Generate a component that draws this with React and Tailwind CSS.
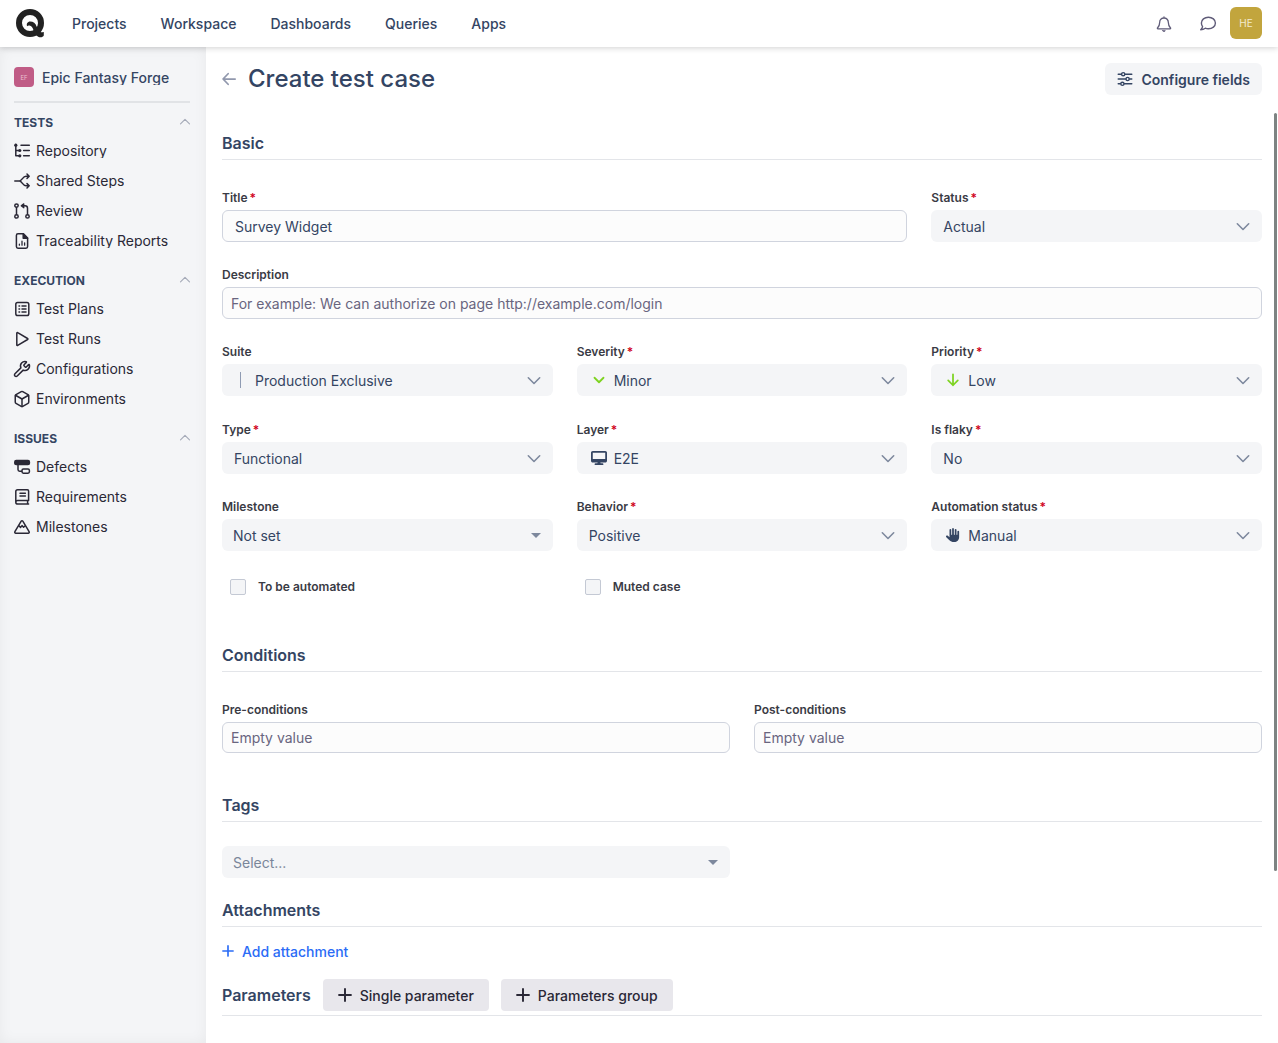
import { FaDesktop, FaHand } from "react-icons/fa6";
import { Wrench, Box } from "lucide-react";

function Icon({ children, size = "size-4", width = 1.5, className = "" }) {
  return (
    <svg
      viewBox="0 0 16 16"
      aria-hidden="true"
      fill="none"
      stroke="currentColor"
      strokeWidth={width}
      strokeLinecap="round"
      strokeLinejoin="round"
      className={`shrink-0 overflow-visible ${size} ${className}`}
    >
      {children}
    </svg>
  );
}

const TreeIcon = () => (
  <Icon>
    <path d="M1.8 1.5v11.3h3.4M1.8 7.500h3.400M7 2.200h8.300M9.600 7.500h5.700M9.600 12.800h5.700" />
    <g fill="currentColor" stroke="none">
      <circle cx="1.8" cy="2.2" r="1.6" />
      <circle cx="5.8" cy="7.5" r="1.6" />
      <circle cx="5.8" cy="12.8" r="1.6" />
    </g>
  </Icon>
);
const SplitIcon = () => (
  <Icon>
    <path d="M.8 8h4.700M5.500 8c2.400 0 3.200-4.800 6.500-4.800h3M5.500 8c2.400 0 3.200 4.800 6.500 4.800h3M13 1l2.200 2.200L13 5.400M13 10.600l2.200 2.200L13 15" />
  </Icon>
);
const ReviewIcon = () => (
  <Icon>
    <circle cx="2.5" cy="2.6" r="1.7" />
    <circle cx="2.5" cy="13.4" r="1.7" />
    <circle cx="13.5" cy="13.4" r="1.7" />
    <path d="M2.500 4.400v7.200M13.500 11.600V5.200c0-1.600-.8-2.400-2.400-2.400H9" />
    <path d="M9.800.8v4L7.200 2.800z" fill="currentColor" strokeWidth="1.2" />
  </Icon>
);
const ReportIcon = () => (
  <Icon>
    <path d="M4 .8h5.400l4.200 4.200v8.600c0 .9-.7 1.600-1.600 1.600H4c-.9 0-1.600-.7-1.600-1.600V2.400C2.400 1.500 3.100.8 4 .8z" />
    <path d="M9.200.8V5.200h4.400z" fill="currentColor" />
    <path d="M5.400 11.200v1M8 8.200v4M10.600 9.800v2.400" strokeWidth="1.3" />
  </Icon>
);
const PlanIcon = () => (
  <Icon>
    <rect x="1.8" y="1.5" width="13" height="13" rx="1.8" />
    <path d="M8 5h4M8 8h4M8 11h4M5 5h.6M5 8h.6M5 11h.6" />
  </Icon>
);
const PlayIcon = () => (
  <Icon>
    <path d="M2.800 2.100v11.800c0 .5.500.8.900.5l9.900-5.900c.4-.2.4-.8 0-1L3.700 1.600c-.4-.3-.9 0-.9.500z" />
  </Icon>
);
const DefectIcon = () => (
  <Icon>
    <rect x=".8" y="1.6" width="14.6" height="4" rx="1.4" fill="currentColor" />
    <path d="M4 6v4.600c0 1 .6 1.600 1.600 1.600h2" />
    <rect x="8" y="10" width="7.4" height="4.2" rx="1.4" />
  </Icon>
);
const BookIcon = () => (
  <Icon>
    <path d="M14.600 11.600V2c0-.6-.5-1.200-1.200-1.200H3.600C2.600.8 1.800 1.600 1.800 2.600v10.600c0 1 .9 1.900 2 1.900h10.800M14.600 11.600H3.600c-1 0-1.800.8-1.800 1.600M13.600 11.600v3.400M6 4.200h5.400M6 7h5.400" />
  </Icon>
);
const MountainIcon = () => (
  <Icon>
    <path d="M7.200 2.200.9 12.700c-.4.700 0 1.500.8 1.500h12.600c.8 0 1.200-.8.8-1.500L8.800 2.200c-.4-.6-1.200-.6-1.600 0zM4.800 6.600l1.800 1.800L8 6.600l1.600 1.600 1.600-1.400" />
  </Icon>
);
const BellIcon = () => (
  <Icon width={1.3}>
    <path d="M8 .9V2M8 2C5.400 2 3.700 4 3.700 6.300c0 3-.9 4.300-2.200 5.700-.3.400-.1.900.4.900h12.200c.5 0 .7-.5.400-.9-1.300-1.400-2.200-2.700-2.200-5.700C12.300 4 10.600 2 8 2z" />
    <path d="M6.700 14.700h2.600c-.2.500-.7.800-1.300.8s-1.100-.3-1.300-.8z" fill="currentColor" strokeWidth=".8" />
  </Icon>
);
const ChatIcon = () => (
  <Icon width={1.4}>
    <path d="M8.400 1.200c4 0 7 2.500 7 5.800s-3 5.800-7 5.800c-1.100 0-2.200-.2-3.100-.6-1.200.9-2.800 1.600-4.600 1.600 1-.9 1.600-2 1.900-3.200C1.800 9.600 1.400 8.400 1.400 7c0-3.300 3.100-5.800 7-5.800z" />
  </Icon>
);
const SlidersIcon = () => (
  <Icon width={1.4}>
    <path d="M1.200 3.200h3M8.200 3.200h6.600M1.200 8h7.400M12.600 8h2.200M1.200 12.800h2.200M7.400 12.800h7.400" />
    <circle cx="6.2" cy="3.2" r="1.6" />
    <circle cx="10.6" cy="8" r="1.6" />
    <circle cx="5.4" cy="12.8" r="1.6" />
  </Icon>
);
const Plus = ({ size }) => (
  <Icon size={size} width={2.2}>
    <path d="M8 1.200v13.600M1.200 8h13.600" />
  </Icon>
);
const Logo = () => (
  <svg viewBox="0 0 28 29" aria-hidden="true" className="h-[29px] w-7 shrink-0 text-[#222]">
    <circle cx="14" cy="14" r="11" fill="none" stroke="currentColor" strokeWidth="6" />
    <path
      d="M11.200 17.200c-1.200-2.400.4-4.800 3-4.800 3 0 5.600 2 6.200 4.600l2.600 5.600c.6.600 1.800.8 4.800.4v3.600c-.8 1.800-3.600 2.200-5.600 1.200l-5.200-3.800c1.400-2.400-.2-6-2.800-7.200-1.200-.6-2.400-.4-3 .4z"
      fill="currentColor"
    />
  </svg>
);

const navSections = [
  {
    title: "TESTS",
    items: [
      ["Repository", <TreeIcon />],
      ["Shared Steps", <SplitIcon />],
      ["Review", <ReviewIcon />],
      ["Traceability Reports", <ReportIcon />],
    ],
  },
  {
    title: "EXECUTION",
    items: [
      ["Test Plans", <PlanIcon />],
      ["Test Runs", <PlayIcon />],
      ["Configurations", <Wrench className="-mx-px size-[18px] shrink-0" />],
      ["Environments", <Box className="-mx-px size-[18px] shrink-0" />],
    ],
  },
  {
    title: "ISSUES",
    items: [
      ["Defects", <DefectIcon />],
      ["Requirements", <BookIcon />],
      ["Milestones", <MountainIcon />],
    ],
  },
];

function Header() {
  return (
    <header className="relative z-10 flex h-[47px] shrink-0 items-center bg-white px-4 shadow-[0_1px_6px_rgba(0,0,0,0.18)]">
      <a href="#home" aria-label="Home" className="mr-7">
        <Logo />
      </a>
      <nav className="flex gap-[34px] text-[14px] leading-5 font-medium text-[#344563]">
        {["Projects", "Workspace", "Dashboards", "Queries", "Apps"].map((t) => (
          <a key={t} href={`#${t.toLowerCase()}`}>
            {t}
          </a>
        ))}
      </nav>
      <div className="ml-auto flex items-center text-[#5f5b78]">
        <button type="button" aria-label="Notifications" className="mr-7">
          <BellIcon />
        </button>
        <button type="button" aria-label="Messages" className="mr-3.5">
          <ChatIcon />
        </button>
        <button type="button" className="mb-px size-8 rounded-md bg-[#c2a53d] text-[10px] text-[#f3ebcf]">
          HE
        </button>
      </div>
    </header>
  );
}

function Sidebar() {
  return (
    <aside className="w-[206px] shrink-0 bg-[#f4f5f7] px-3.5 pt-5 shadow-[inset_0_0_14px_rgba(0,0,0,0.05)]">
      <a href="#project" className="flex h-5 items-center gap-2">
        <span className="grid size-5 shrink-0 place-items-center rounded bg-[#c05c86] text-[6px] text-[#e9bfd1]">EF</span>
        <span className="truncate pt-px text-[14px] leading-none font-medium text-[#344563]">Epic Fantasy Forge</span>
      </a>
      <hr className="mt-3.5 mr-0.5 border-t-2 border-[#e1e3e6]" />
      <nav className="mt-[5px] flex flex-col gap-2.5">
        {navSections.map((s) => (
          <section key={s.title}>
            <button type="button" className="flex h-7 w-full items-center justify-between text-[12px] leading-4 font-bold text-[#344563]">
              <span className="pt-px">{s.title}</span>
              <Icon size="size-3" width={1.5} className="mr-px text-[#a5aab8]">
                <path d="M2 10.500 8 4.500l6 6" />
              </Icon>
            </button>
            <ul>
              {s.items.map(([label, icon]) => (
                <li key={label}>
                  <a href={`#${label}`} className="flex h-[30px] items-center gap-1.5 text-[#2a2836]">
                    {icon}
                    <span className="truncate text-[14px] leading-none">{label}</span>
                  </a>
                </li>
              ))}
            </ul>
          </section>
        ))}
      </nav>
    </aside>
  );
}

function Label({ id, required, children }) {
  return (
    <label htmlFor={id} className="block h-5 text-[12px] leading-4 font-semibold text-[#3a3b45]">
      {children}
      {required && <span className="ml-0.5 text-[#d0021b]">*</span>}
    </label>
  );
}

function TextField({ id, label, required, pad = "px-2", height = "h-8", className = "", ...rest }) {
  return (
    <div className={className}>
      <Label id={id} required={required}>
        {label}
      </Label>
      <input
        id={id}
        type="text"
        className={`block w-full rounded-md border border-[#d0d4de] bg-[#fcfcfc] text-[14px] text-[#344563] placeholder:text-[#69657f] ${height} ${pad}`}
        {...rest}
      />
    </div>
  );
}

function SelectBox({ id, value, icon, caret, pad = "pl-3", iconPad = "left-3.5", color = "text-[#344563]", label }) {
  return (
    <div className="relative">
      <select id={id} aria-label={label} className={`block h-8 w-full appearance-none rounded-md bg-[#f4f5f7] pr-9 text-[14px] ${color} ${pad}`}>
        <option>{value}</option>
      </select>
      {icon && <span className={`pointer-events-none absolute inset-y-0 flex w-4 items-center justify-center text-[#344563] ${iconPad}`}>{icon}</span>}
      <span className="pointer-events-none absolute inset-y-0 right-3 flex items-center text-[#7d889d]">
        {caret ? (
          <svg viewBox="0 0 10 5" aria-hidden="true" className="h-[5px] w-2.5">
            <path d="M0 0h10L5 5z" fill="currentColor" />
          </svg>
        ) : (
          <Icon size="size-3.5" width={1.8}>
            <path d="M1.500 5.500 8 12l6.500-6.500" />
          </Icon>
        )}
      </span>
    </div>
  );
}

function SelectField({ id, label, required, ...rest }) {
  return (
    <div>
      <Label id={id} required={required}>
        {label}
      </Label>
      <SelectBox id={id} {...rest} />
    </div>
  );
}

function CheckField({ id, label }) {
  return (
    <div className="flex items-center gap-3 pl-2">
      <input id={id} type="checkbox" className="size-4 appearance-none rounded-xs border border-[#c4c9d4] bg-[#f4f5f7]" />
      <label htmlFor={id} className="text-[12px] leading-4 font-semibold text-[#3a3b45]">
        {label}
      </label>
    </div>
  );
}

function Heading({ children }) {
  return <h2 className="h-[29px] border-b border-[#e3e5e9] text-[16px] leading-6 font-semibold text-[#344563]">{children}</h2>;
}

function CaseForm() {
  return (
    <form className="px-4 pt-5">
      <Heading>Basic</Heading>
      <div className="mt-[30px] grid grid-cols-3 gap-x-6 gap-y-[25px]">
        <TextField id="title" label="Title" required pad="px-3" className="col-span-2" defaultValue="Survey Widget" />
        <SelectField id="status" label="Status" required value="Actual" />
        <TextField id="description" label="Description" className="col-span-3" placeholder="For example: We can authorize on page http://example.com/login" />
        <SelectField
          id="suite"
          label="Suite"
          value="Production Exclusive"
          pad="pl-[33px]"
          iconPad="left-2.5"
          icon={<span className="h-4 w-px bg-[#8f9bb3]" />}
        />
        <SelectField
          id="severity"
          label="Severity"
          required
          value="Minor"
          pad="pl-[37px]"
          icon={
            <Icon size="size-3" width={2.4} className="text-[#7ed321]">
              <path d="M2 5l6 6 6-6" />
            </Icon>
          }
        />
        <SelectField
          id="priority"
          label="Priority"
          required
          value="Low"
          pad="pl-[37px]"
          icon={
            <Icon size="size-3.5" width={2} className="text-[#7ed321]">
              <path d="M8 1.500V14M2.500 8.500 8 14l5.500-5.500" />
            </Icon>
          }
        />
      </div>
      <div className="mt-[26px] grid grid-cols-3 gap-x-6 gap-y-[25px]">
        <SelectField id="type" label="Type" required value="Functional" />
        <SelectField id="layer" label="Layer" required value="E2E" pad="pl-[37px]" icon={<FaDesktop className="size-4" />} />
        <SelectField id="flaky" label="Is flaky" required value="No" />
        <SelectField id="milestone" label="Milestone" value="Not set" caret pad="pl-[11px]" />
        <SelectField id="behavior" label="Behavior" required value="Positive" />
        <SelectField id="automation" label="Automation status" required value="Manual" pad="pl-[37px]" icon={<FaHand className="size-3.5" />} />
      </div>
      <div className="mt-7 grid grid-cols-3 gap-x-6">
        <CheckField id="to-automate" label="To be automated" />
        <CheckField id="muted" label="Muted case" />
      </div>

      <div className="mt-12">
        <Heading>Conditions</Heading>
        <div className="mt-[30px] grid grid-cols-2 gap-x-6">
          <TextField id="pre" label="Pre-conditions" height="h-[31px]" placeholder="Empty value" />
          <TextField id="post" label="Post-conditions" height="h-[31px]" placeholder="Empty value" />
        </div>
      </div>

      <div className="mt-10">
        <Heading>Tags</Heading>
        <div className="mt-6 grid grid-cols-2 gap-x-6">
          <SelectBox id="tags" label="Tags" value="Select..." caret pad="pl-[11px]" color="text-[#7a869a]" />
        </div>
      </div>

      <div className="mt-5">
        <Heading>Attachments</Heading>
        <button type="button" className="mt-3 flex h-6 items-center gap-2 text-[14px] font-medium text-[#2b6cf6]">
          <Plus size="size-3" />
          Add attachment
        </button>
      </div>

      <div className="mt-4 flex items-center gap-3 border-b border-[#e3e5e9] pb-1">
        <h2 className="text-[16px] leading-6 font-semibold text-[#344563]">Parameters</h2>
        {["Single parameter", "Parameters group"].map((t) => (
          <button key={t} type="button" className="flex h-8 items-center gap-2 rounded bg-[#e8e7ec] px-[15px] text-[14px] font-medium text-[#2a2836]">
            <Plus size="size-3.5" />
            {t}
          </button>
        ))}
      </div>
    </form>
  );
}

export default function App() {
  return (
    <div className="flex h-screen flex-col overflow-hidden bg-white font-['Inter',sans-serif]">
      <Header />
      <div className="flex min-h-0 flex-1">
        <Sidebar />
        <main className="flex min-w-0 flex-1 flex-col">
          <div className="flex shrink-0 items-center px-4 py-4">
            <a href="#back" aria-label="Back" className="mr-3 text-[#9198ad]">
              <Icon size="size-3.5" width={2}>
                <path d="M15 8H1.500M7 2 1.200 8 7 14" />
              </Icon>
            </a>
            <h1 className="text-[24px] leading-8 font-medium text-[#344563]">Create test case</h1>
            <button type="button" className="ml-auto flex h-8 items-center gap-2 rounded-md bg-[#f4f5f7] px-3 text-[14px] font-semibold text-[#344563]">
              <SlidersIcon />
              Configure fields
            </button>
          </div>
          <div className="relative min-h-0 flex-1">
            <div className="h-full overflow-y-auto [scrollbar-width:none]">
              <CaseForm />
            </div>
            <div aria-hidden="true" className="absolute top-0.5 right-px h-[81.3%] w-[3px] rounded-full bg-[#7d8382]" />
          </div>
        </main>
      </div>
    </div>
  );
}
